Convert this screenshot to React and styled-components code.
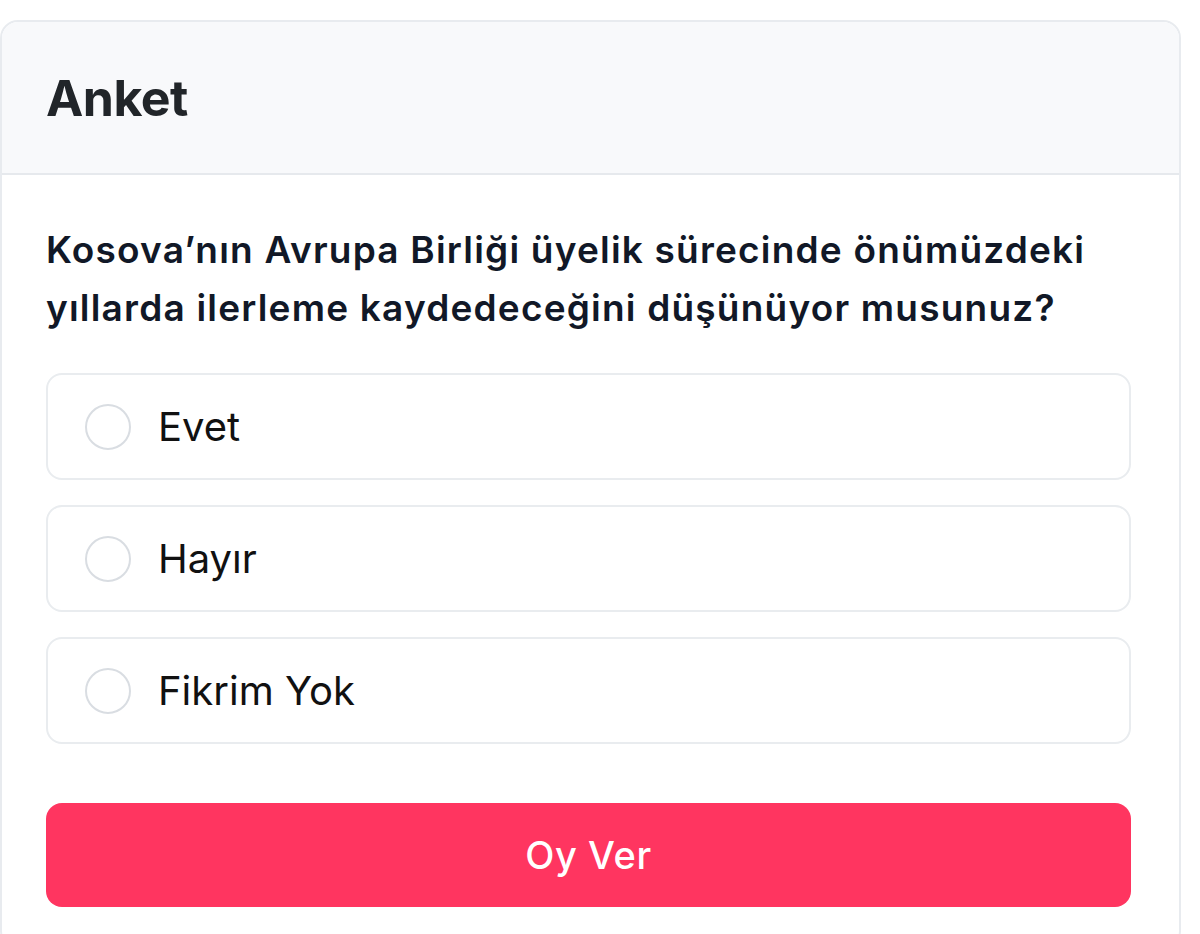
import React, { useState } from 'react'
import styled, { createGlobalStyle } from 'styled-components'

const GlobalStyle = createGlobalStyle`
    * {
        box-sizing: border-box;
    }
    body {
        margin: 0;
        background: #ffffff;
        font-family: 'Inter', 'Noto Sans', sans-serif;
    }
`

const options = ['Evet', 'Hayır', 'Fikrim Yok']

const Poll = () => {
    const [choice, setChoice] = useState(null)

    const submit = e => {
        e.preventDefault()
    }

    return (
        <Page>
            <GlobalStyle />
            <Card>
                <Header>
                    <Title>Anket</Title>
                </Header>
                <Body onSubmit={submit}>
                    <Question>
                        Kosova’nın Avrupa Birliği üyelik sürecinde önümüzdeki
                        yıllarda ilerleme kaydedeceğini düşünüyor musunuz?
                    </Question>
                    <Options>
                        {options.map(opt => (
                            <Option key={opt}>
                                <Radio
                                    type='radio'
                                    name='poll'
                                    checked={choice === opt}
                                    onChange={() => setChoice(opt)}
                                />
                                <OptionText>{opt}</OptionText>
                            </Option>
                        ))}
                    </Options>
                    <Button type='submit'>Oy Ver</Button>
                </Body>
            </Card>
        </Page>
    )
}

const Page = styled.div`
    width: 100%;
    padding-top: 20px;
`

const Card = styled.div`
    width: 1181px;
    border: 2px solid #e8ebef;
    border-radius: 18px;
    background: #ffffff;
    overflow: hidden;
`

const Header = styled.div`
    height: 153px;
    padding: 0 44px;
    display: flex;
    align-items: center;
    background: #f8f9fb;
    border-bottom: 2px solid #e6e9ed;
`

const Title = styled.h1`
    margin: 0;
    font-size: 50px;
    font-weight: 700;
    color: #212529;
    letter-spacing: -0.5px;
`

const Body = styled.form`
    padding: 46px 48px 40px 44px;
    display: flex;
    flex-direction: column;
`

const Question = styled.p`
    margin: 0 0 36px;
    font-size: 37px;
    line-height: 58px;
    font-weight: 600;
    letter-spacing: 1.2px;
    color: #111827;
`

const Options = styled.div`
    display: flex;
    flex-direction: column;
    gap: 25px;
`

const Option = styled.label`
    height: 107px;
    padding: 0 37px;
    display: flex;
    align-items: center;
    gap: 27px;
    border: 2px solid #e9ecef;
    border-radius: 16px;
    cursor: pointer;
`

const Radio = styled.input`
    appearance: none;
    margin: 0;
    width: 46px;
    height: 46px;
    border: 2px solid #d9dde2;
    border-radius: 50%;
    background: #ffffff;
    flex-shrink: 0;

    &:checked {
        border: 13px solid #ff3560;
    }
`

const OptionText = styled.span`
    font-size: 40px;
    font-weight: 400;
    color: #111111;
`

const Button = styled.button`
    margin-top: 59px;
    height: 104px;
    width: 100%;
    border: none;
    border-radius: 16px;
    background: #ff3560;
    color: #ffffff;
    font-family: inherit;
    font-size: 38px;
    font-weight: 500;
    letter-spacing: 0.6px;
    cursor: pointer;
`

export default Poll
